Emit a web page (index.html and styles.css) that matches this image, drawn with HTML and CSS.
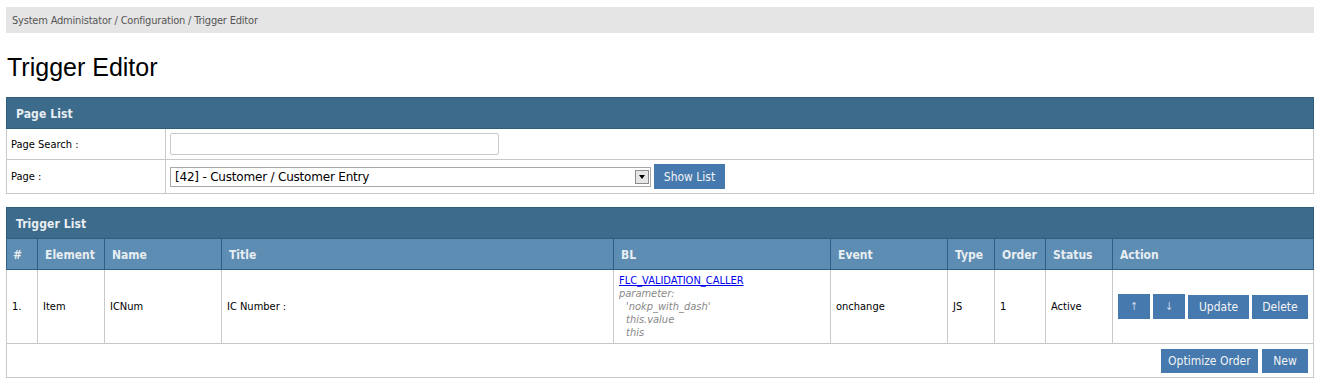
FILE: index.html
```html
<!DOCTYPE html>
<html lang="en">
<head>
	<meta charset="UTF-8">
	<title>Trigger Editor</title>
	<link rel="stylesheet" href="styles.css">
</head>
<body>
<div class="crumb">System Administator / Configuration / Trigger Editor</div>
<h1 class="title">Trigger Editor</h1>

<table class="panel pages">
	<tr><th class="cap" colspan="2">Page List</th></tr>
	<tr class="r1">
		<td class="lbl">Page Search :</td>
		<td><input type="text" class="txt"></td>
	</tr>
	<tr class="r2">
		<td class="lbl">Page :</td>
		<td>
			<div class="pick">
				<div class="sel"><span>[42] - Customer / Customer Entry</span><i class="drop"></i></div>
				<a href="javascript:;" class="btn show">Show List</a>
			</div>
		</td>
	</tr>
</table>

<table class="panel trig">
	<tr><th class="cap" colspan="10">Trigger List</th></tr>
	<tr class="head">
		<th class="c1">#</th>
		<th class="c2">Element</th>
		<th class="c3">Name</th>
		<th class="c4">Title</th>
		<th class="c5">BL</th>
		<th class="c6">Event</th>
		<th class="c7">Type</th>
		<th class="c8">Order</th>
		<th class="c9">Status</th>
		<th class="c10">Action</th>
	</tr>
	<tr class="row">
		<td>1.</td>
		<td>Item</td>
		<td>ICNum</td>
		<td>IC Number :</td>
		<td class="bl">
			<a href="javascript:;">FLC_VALIDATION_CALLER</a>
			<div class="param">parameter:</div>
			<div class="arg">'nokp_with_dash'</div>
			<div class="arg">this.value</div>
			<div class="arg">this</div>
		</td>
		<td>onchange</td>
		<td>JS</td>
		<td>1</td>
		<td>Active</td>
		<td>
			<div class="acts">
				<a href="javascript:;" class="btn arr">&uarr;</a>
				<a href="javascript:;" class="btn arr">&darr;</a>
				<a href="javascript:;" class="btn">Update</a>
				<a href="javascript:;" class="btn">Delete</a>
			</div>
		</td>
	</tr>
	<tr>
		<td class="foot" colspan="10">
			<a href="javascript:;" class="btn">Optimize Order</a>
			<a href="javascript:;" class="btn">New</a>
		</td>
	</tr>
</table>
</body>
</html>
```

FILE: styles.css
```css
body{
	margin:7px 9px 0 6px;
	padding:0;
	font-family:"DejaVu Sans Condensed","DejaVu Sans",sans-serif;
	font-size:11px;
	color:#000;
	background:#fff;
}
.crumb{
	height:26px;
	line-height:28px;
	padding-left:6px;
	background:#e5e5e5;
	color:#555;
	letter-spacing:-0.2px;
}
.title{
	margin:20px 0 16px 1px;
	font-family:"Liberation Sans",Arial,sans-serif;
	font-size:25px;
	line-height:28px;
	font-weight:normal;
}
.panel{
	width:100%;
	border-collapse:collapse;
	border:1px solid #c8c8c8;
	margin-bottom:13px;
}
.panel td{
	border:1px solid #c8c8c8;
	padding:0 4px;
	text-align:left;
}
.panel .cap{
	height:29px;
	background:#3c6b8b;
	border:1px solid #2f5d7e;
	color:#e9eef2;
	font-size:12px;
	font-weight:bold;
	text-align:left;
	padding:1px 0 0 9px;
	letter-spacing:0.1px;
}
.lbl{
	width:150px;
}
.pages .r1 td{
	height:30px;
}
.pages .r2 td{
	height:33px;
}
.txt{
	display:block;
	box-sizing:border-box;
	width:329px;
	height:22px;
	margin:0;
	border:1px solid #c9c9c9;
	border-radius:2px;
}
.pick{
	display:flex;
	align-items:center;
	gap:3px;
}
.sel{
	box-sizing:border-box;
	width:481px;
	height:20px;
	border:1px solid #a9a9a9;
	display:flex;
	align-items:center;
	justify-content:space-between;
	padding:0 1px 0 4px;
	font-family:"DejaVu Sans","Noto Sans",sans-serif;
	font-size:12px;
	letter-spacing:-0.2px;
}
.drop{
	width:14px;
	height:14px;
	box-sizing:border-box;
	border:1px solid #8c8c8c;
	background:#e6e6e6;
	position:relative;
}
.drop:after{
	content:"";
	position:absolute;
	left:3px;
	top:4px;
	border:3px solid transparent;
	border-top:4px solid #000;
}
.btn{
	display:inline-flex;
	align-items:center;
	justify-content:center;
	height:24px;
	padding:0;
	background:#4679ad;
	color:#f2f4f7;
	font-size:12px;
	text-decoration:none;
	white-space:nowrap;
	box-sizing:border-box;
	vertical-align:middle;
}
.show{
	height:25px;
	width:71px;
}
.head th{
	height:29px;
	background:#5e8db3;
	border:1px solid #2e5f82;
	color:#e8edf2;
	font-size:12px;
	font-weight:bold;
	text-align:left;
	padding:1px 0 0 7px;
}
.head .c1{width:24px;padding-left:6px;}
.head .c2{width:59px;}
.head .c3{width:109px;}
.head .c4{width:384px;}
.head .c5{width:209px;}
.head .c6{width:109px;}
.head .c7{width:39px;}
.head .c8{width:43px;}
.head .c9{width:59px;}
.row td{
	height:73px;
	padding:0 5px;
}
.row .bl{
	height:69px;
	padding-top:4px;
	vertical-align:top;
	line-height:13px;
}
.bl a{
	color:#0000ee;
	text-decoration:underline;
}
.param,.arg{
	color:#888;
	font-style:italic;
}
.arg{
	padding-left:7px;
}
.acts{
	display:flex;
	align-items:center;
	gap:3px;
}
.acts .arr{
	width:32px;
	height:25px;
	color:#c9d6ea;
	font-size:11px;
}
.acts .btn:nth-child(3){width:61px;}
.acts .btn:nth-child(4){width:56px;}
.foot{
	height:33px;
	text-align:right !important;
	padding-right:5px !important;
}
.foot .btn:first-child{width:97px;margin-right:1px;}
.foot .btn:last-child{width:46px;}
```
